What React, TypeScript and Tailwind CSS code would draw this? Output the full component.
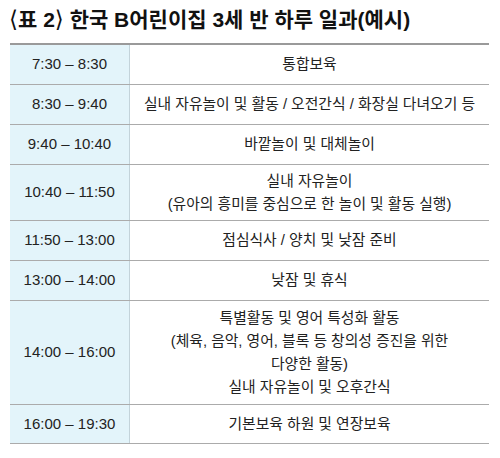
const rows: { time: string; lines: string[]; h: string }[] = [
  { time: "7:30 – 8:30", lines: ["통합보육"], h: "h-[40px]" },
  { time: "8:30 – 9:40", lines: ["실내 자유놀이 및 활동 / 오전간식 / 화장실 다녀오기 등"], h: "h-[40px]" },
  { time: "9:40 – 10:40", lines: ["바깥놀이 및 대체놀이"], h: "h-[40px]" },
  { time: "10:40 – 11:50", lines: ["실내 자유놀이", "(유아의 흥미를 중심으로 한 놀이 및 활동 실행)"], h: "h-[56px]" },
  { time: "11:50 – 13:00", lines: ["점심식사 / 양치 및 낮잠 준비"], h: "h-[40px]" },
  { time: "13:00 – 14:00", lines: ["낮잠 및 휴식"], h: "h-[40px]" },
  {
    time: "14:00 – 16:00",
    lines: ["특별활동 및 영어 특성화 활동", "(체육, 음악, 영어, 블록 등 창의성 증진을 위한", "다양한 활동)", "실내 자유놀이 및 오후간식"],
    h: "h-[104px]",
  },
  { time: "16:00 – 19:30", lines: ["기본보육 하원 및 연장보육"], h: "h-[39px]" },
];

export default function App() {
  return (
    <div className="w-[500px] h-[458px] bg-white font-['Liberation_Sans','Noto_Sans_CJK_KR',sans-serif] text-[#222]">
      <h1 className="pl-[9px] pt-[5px] h-[43px] text-[21px] font-bold leading-[29px] text-[#111]">
        <span className="font-['DejaVu_Sans'] font-normal text-[23px]">⟨</span>표 2<span className="font-['DejaVu_Sans'] font-normal text-[23px]">⟩</span> 한국 B어린이집 3세 반 하루 일과(예시)
      </h1>
      <div className="ml-[10px] w-[479px] border-t-2 border-[#9a9a9a]">
        {rows.map((r) => (
          <div key={r.time} className={`flex border-b border-[#ababab] ${r.h}`}>
            <div className="w-[120px] shrink-0 bg-[#e3f4fa] border-r border-[#c3d3da] flex items-center justify-center text-[15px]">
              {r.time}
            </div>
            <div className="flex-1 flex flex-col items-center justify-center text-[14.8px] leading-[23px]">
              {r.lines.map((l) => (
                <span key={l}>{l}</span>
              ))}
            </div>
          </div>
        ))}
      </div>
    </div>
  );
}
